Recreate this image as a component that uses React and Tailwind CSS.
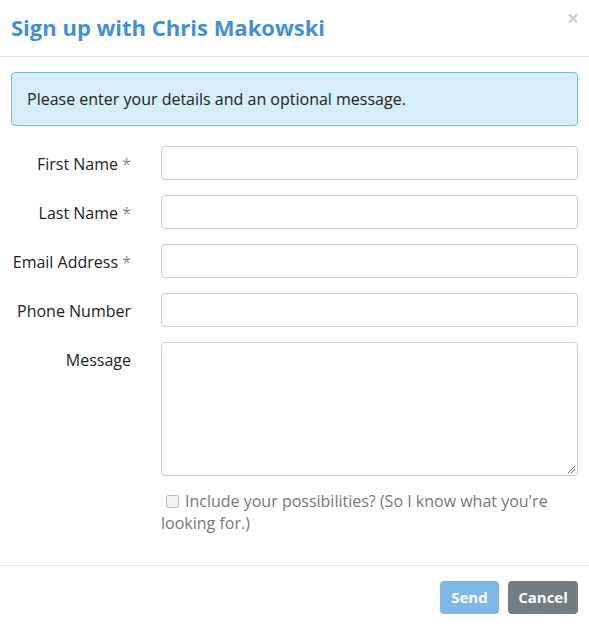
export default function App() {
  const fields = [
    { label: "First Name", req: true },
    { label: "Last Name", req: true },
    { label: "Email Address", req: true },
    { label: "Phone Number", req: false },
  ];
  return (
    <div className="w-[589px] h-[626px] bg-white text-[16px] text-[#222]" style={{ fontFamily: '"Open Sans", sans-serif' }}>
      <div className="relative h-[57px] border-b border-[#e5e5e5] pl-[11px] pt-[12px]">
        <h1 className="text-[22px] leading-[30px] font-bold text-[#4190d8]">Sign up with Chris Makowski</h1>
        <span className="absolute right-[10px] top-[6px] text-[21px] font-bold leading-[24px] text-[#cfcfcf]">×</span>
      </div>
      <div className="px-[11px] pt-[15px]">
        <div className="h-[54px] rounded-[4px] border border-[#6cc3e5] bg-[#d6eef7] pl-[15px] pt-[15px] leading-[22px] text-[#222]">
          Please enter your details and an optional message.
        </div>
        <div className="mt-[20px] flex flex-col gap-[15px]">
          {fields.map((f) => (
            <div key={f.label} className="grid grid-cols-[120px_1fr] gap-x-[30px]">
              <label className="pt-[7px] text-right leading-[22px] text-[#222]">
                {f.label}
                {f.req && <span className="text-[#888]"> *</span>}
              </label>
              <div className="h-[34px] rounded-[4px] border border-[#ccc] bg-white"></div>
            </div>
          ))}
          <div className="grid grid-cols-[120px_1fr] gap-x-[30px]">
            <label className="pt-[7px] text-right leading-[22px] text-[#222]">Message</label>
            <div className="relative h-[134px] rounded-[4px] border border-[#ccc] bg-white">
              <svg className="absolute right-[1px] bottom-[1px]" width="9" height="9" viewBox="0 0 9 9">
                <line x1="8" y1="1" x2="1" y2="8" stroke="#777" strokeWidth="1" />
                <line x1="8" y1="4" x2="4" y2="8" stroke="#777" strokeWidth="1" />
              </svg>
            </div>
          </div>
        </div>
        <div className="ml-[150px] mt-[14px] mr-[20px] leading-[22px] text-[#777]">
          <span className="inline-block w-[13px] h-[13px] rounded-[2px] border border-[#bbb] bg-[#f1f1f1] ml-[5px] mr-[6px] align-[-1px]"></span>
          Include your possibilities? (So I know what you're looking for.)
        </div>
      </div>
      <div className="mt-[31px] border-t border-[#e5e5e5] flex justify-end gap-[9px] pt-[15px] pr-[11px]">
        <button className="h-[33px] w-[59px] rounded-[4px] bg-[#7fb8e6] text-white font-bold text-[15px]">Send</button>
        <button className="h-[33px] w-[70px] rounded-[4px] bg-[#737b83] text-white font-bold text-[15px]">Cancel</button>
      </div>
    </div>
  );
}
